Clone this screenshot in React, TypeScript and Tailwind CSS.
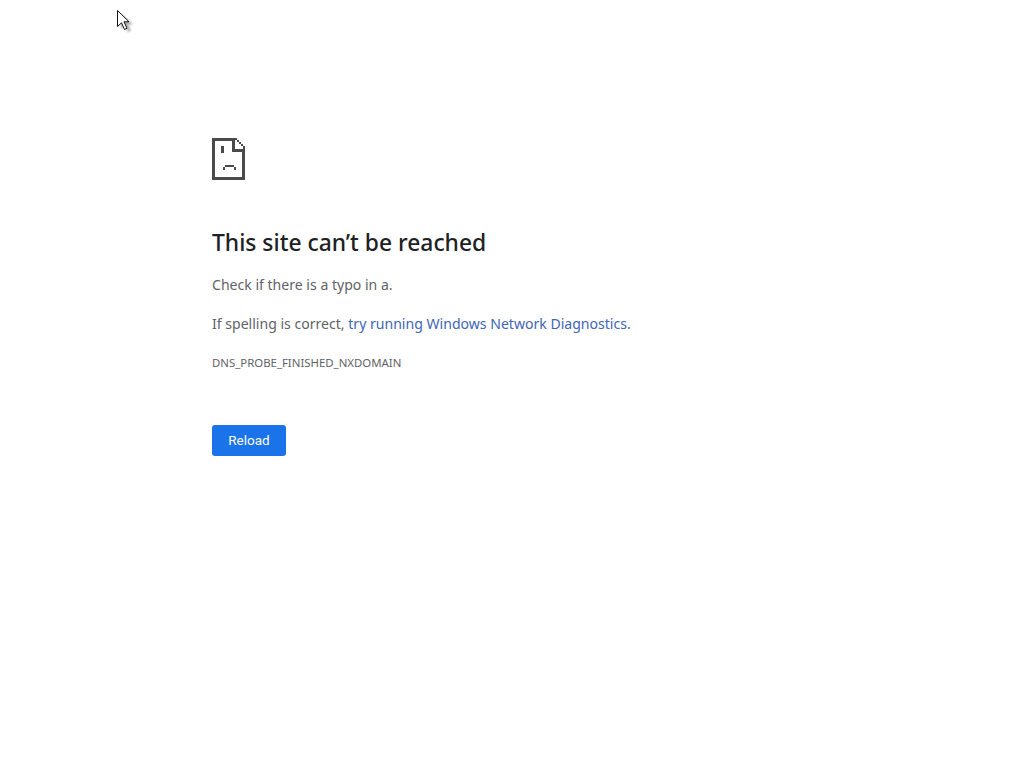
const SadDocIcon = () => (
  <svg width="34" height="42" viewBox="0 0 34 42" shapeRendering="crispEdges" fill="#4a4a4a" className="block">
    {/* page outline */}
    <path d="M0 0H23V3H3V39H30V14H33V42H0Z" />
    {/* folded corner */}
    <path d="M20 3H23V11H33V14H20Z" />
    <path d="M23 0H25V2H27V4H29V6H31V8H33V11H31V8H29V6H27V4H25V2H23Z" />
    {/* eye */}
    <rect x="9" y="8" width="3" height="7" />
    {/* mouth */}
    <path d="M13 27H22V29H13ZM11 29H13V32H11ZM22 29H24V32H22Z" />
  </svg>
);

const Cursor = () => (
  <div className="absolute left-[116px] top-[9px] h-6 w-[18px]">
    <svg width="18" height="24" viewBox="0 0 18 24" className="absolute inset-0 blur-[1px]">
      <path d="M5 5L5 20L9 16.500L12 23L15 21.500L12 15.500L17 15.500Z" fill="#777777" opacity="0.6" />
    </svg>
    <svg width="18" height="24" viewBox="0 0 18 24" className="absolute inset-0">
      <path
        d="M1.500 1.500V17.500L5.500 13.800L8.500 20.500L11 19.300L8 12.800H13Z"
        fill="#ffffff"
        stroke="#111111"
        strokeWidth="1"
      />
    </svg>
  </div>
);

export default function App() {
  return (
    <div className="relative min-h-[768px] bg-white pl-[212px] pt-[138px] font-['Noto_Sans','Open_Sans',sans-serif]">
      <Cursor />
      <SadDocIcon />

      <h1 className="mt-[48px] text-[22.85px] leading-[30px] font-medium text-[#202124]">
        This site can’t be reached
      </h1>

      <p className="mt-[17px] text-[14.07px] leading-5 text-[#5f6368]">Check if there is a typo in a.</p>

      <p className="mt-[19px] text-[14.07px] leading-5 text-[#5f6368]">
        If spelling is correct, <a className="text-[#3f66b5]">try running Windows Network Diagnostics</a>.
      </p>

      <p className="mt-[21px] text-[11.4px] leading-4 text-[#5f6368]">DNS_PROBE_FINISHED_NXDOMAIN</p>

      <button
        type="button"
        className="mt-[54px] block h-[31px] w-[74px] rounded-[3px] bg-[#1a73e8] text-[13.5px] font-['Roboto',sans-serif] font-normal text-white"
      >
        Reload
      </button>
    </div>
  );
}
